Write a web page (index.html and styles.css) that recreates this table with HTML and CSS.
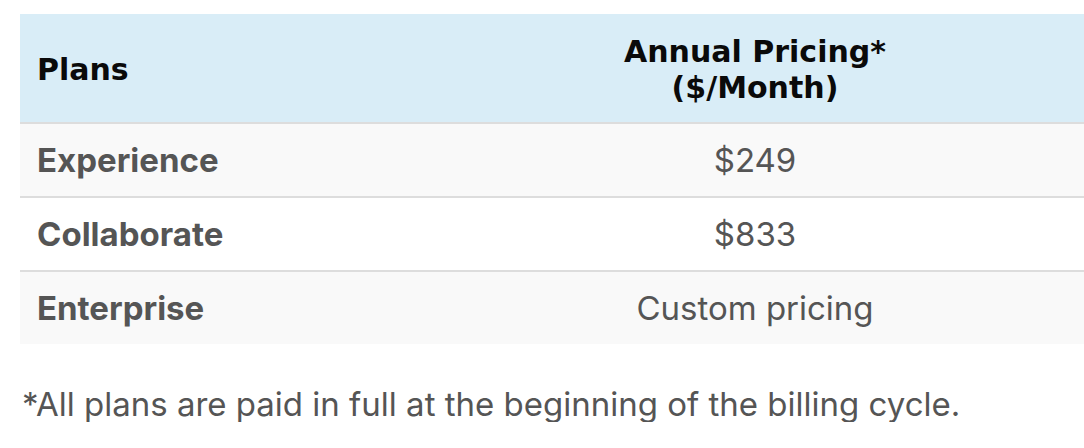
FILE: index.html
```html
<!DOCTYPE html>
<html>
<head>
<meta charset="utf-8">
<link rel="stylesheet" href="styles.css">
</head>
<body>
<table class="pricing">
  <thead>
    <tr>
      <th class="col-plan">Plans</th>
      <th class="col-price">Annual Pricing*<br>($/Month)</th>
    </tr>
  </thead>
  <tbody>
    <tr class="odd"><td class="plan">Experience</td><td class="price">$249</td></tr>
    <tr class="even"><td class="plan">Collaborate</td><td class="price">$833</td></tr>
    <tr class="odd"><td class="plan">Enterprise</td><td class="price">Custom pricing</td></tr>
  </tbody>
</table>
<p class="note">*All plans are paid in full at the beginning of the billing cycle.</p>
</body>
</html>
```
FILE: styles.css
```css
html, body {
  margin: 0;
  padding: 0;
  background: #fff;
}
body {
  padding: 14px 0 0 20px;
  font-family: Inter, "Liberation Sans", sans-serif;
  color: #555;
  overflow: hidden;
}
.pricing {
  width: 1064px;
  border-collapse: collapse;
  border-spacing: 0;
}
.pricing th {
  background: #d9edf7;
  color: #0a0a0a;
  font-family: "DejaVu Sans", sans-serif;
  font-weight: bold;
  font-size: 30px;
  line-height: 36px;
  padding: 20px 17px 16px;
  border-bottom: 2px solid #ddd;
}
.col-plan {
  width: 372px;
  text-align: left;
}
.col-price {
  text-align: center;
}
.pricing td {
  font-size: 33px;
  line-height: 36px;
  padding: 18px 17px 18px 17px;
  border-top: 2px solid #ddd;
  height: 35px;
}
.pricing tbody tr:first-child td {
  border-top: 0;
}
.odd td {
  background: #f9f9f9;
}
.even td {
  background: #fff;
}
.plan {
  font-weight: 700;
}
.price {
  text-align: center;
  font-weight: 400;
}
.note {
  margin: 42px 0 0 2px;
  font-size: 33px;
  line-height: 36px;
}
```
